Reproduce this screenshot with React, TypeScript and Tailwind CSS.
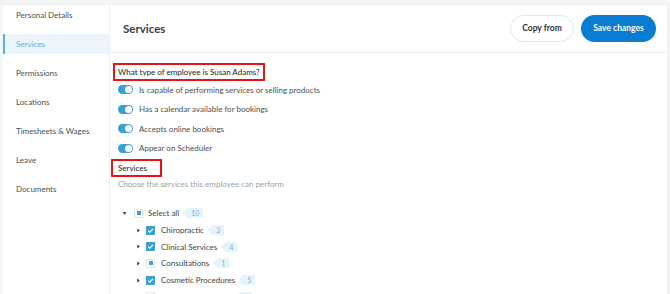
import React from 'react';

const navItems = ['Personal Details', 'Services', 'Permissions', 'Locations', 'Timesheets & Wages', 'Leave', 'Documents'];

const toggles = [
  'Is capable of performing services or selling products',
  'Has a calendar available for bookings',
  'Accepts online bookings',
  'Appear on Scheduler',
];

const services = [
  { name: 'Chiropractic', count: 3, state: 'checked' },
  { name: 'Clinical Services', count: 4, state: 'checked' },
  { name: 'Consultations', count: 1, state: 'partial' },
  { name: 'Cosmetic Procedures', count: 5, state: 'checked' },
  { name: 'Functional Medicine', count: 5, state: 'none' },
];

const Toggle = () => (
  <span className="relative inline-block w-[15px] h-[9px] rounded-full bg-[#3b9fd1] shrink-0">
    <span className="absolute right-[1px] top-[1px] w-[7px] h-[7px] rounded-full bg-white" />
  </span>
);

const Badge: React.FC<{ n: number }> = ({ n }) => (
  <span className="flex items-center ml-[4px]">
    <span className="w-0 h-0 border-y-[5px] border-y-transparent border-r-[4px] border-r-[#e7f3fb]" />
    <span className="h-[10px] px-[4px] bg-[#e7f3fb] text-[#6fb6df] text-[7px] leading-[10px]">{n}</span>
  </span>
);

const Box: React.FC<{ state: string }> = ({ state }) => {
  if (state === 'checked')
    return (
      <span className="w-[9px] h-[9px] bg-[#3e9fd0] flex items-center justify-center shrink-0">
        <svg width="7" height="7" viewBox="0 0 8 8">
          <path d="M1.3 4.2 L3.2 6 L6.8 2" stroke="white" strokeWidth="1.3" fill="none" />
        </svg>
      </span>
    );
  return (
    <span className="w-[9px] h-[9px] border border-[#e3e6ea] bg-white flex items-center justify-center shrink-0">
      {state === 'partial' && <span className="w-[4px] h-[4px] bg-[#3e9fd0]" />}
    </span>
  );
};

const Caret: React.FC<{ down?: boolean }> = ({ down }) => (
  <svg width="5" height="5" viewBox="0 0 6 6" className="shrink-0">
    {down ? <path d="M0.5 1.5 L5.5 1.5 L3 4.5 Z" fill="#333" /> : <path d="M1.5 0.5 L4.5 3 L1.5 5.5 Z" fill="#333" />}
  </svg>
);

export default function App() {
  return (
    <div className="w-[670px] h-[294px] overflow-hidden bg-[#f4f5f7] pl-[3px] pt-[4px] pr-[2px] text-[#3a3d40]" style={{ fontFamily: 'Lato, "Open Sans", sans-serif' }}>
      <div className="flex h-full bg-white border-t border-r border-[#eceef0]">
        {/* Sidebar */}
        <aside className="w-[107px] shrink-0 border-r border-[#eceef0]">
          <nav className="flex flex-col gap-[9px]">
            {navItems.map((item) => {
              const active = item === 'Services';
              return (
                <div
                  key={item}
                  className={`h-[20px] flex items-center text-[8px] ${
                    active ? 'bg-[#ebf5fb] text-[#5cb0dd] border-l-2 border-[#5cb0dd] pl-[11px]' : 'pl-[13px] text-[#4a4f54]'
                  }`}
                >
                  {item}
                </div>
              );
            })}
          </nav>
        </aside>

        {/* Main */}
        <main className="flex-1 flex flex-col">
          <header className="h-[48px] shrink-0 flex items-center justify-between pl-[13px] pr-[11px] border-b border-[#eceef0]">
            <h1 className="text-[11.5px] font-bold text-[#3a3d40]">Services</h1>
            <div className="flex items-center gap-[7px]">
              <button className="w-[64px] h-[27px] rounded-full border border-[#e3e6e9] text-[8.5px] font-bold text-[#333]">Copy from</button>
              <button className="w-[75px] h-[27px] rounded-full bg-[#0b7cd4] text-[8.5px] font-bold text-white">Save changes</button>
            </div>
          </header>

          <section className="flex flex-col items-start pl-[3px] pt-[10px]">
            <div className="flex h-[18px] items-center px-[3px] border-2 border-[#e3161c] text-[8px] text-[#222] whitespace-nowrap">
              What type of employee is Susan Adams?
            </div>
            <div className="flex flex-col gap-[10px] pl-[5px] mt-[4px]">
              {toggles.map((t) => (
                <div key={t} className="flex items-center gap-[6px] h-[9.5px] text-[8px] text-[#4a4f54] whitespace-nowrap">
                  <Toggle />
                  {t}
                </div>
              ))}
            </div>
            <div className="mt-[6px] -ml-[2px] flex h-[18px] w-[51px] items-center px-[5px] border-2 border-[#e3161c] text-[8px] text-[#222]">
              Services
            </div>
            <p className="pl-[5px] mt-[2px] h-[10px] leading-[10px] text-[8px] text-[#9ba1a7] whitespace-nowrap">Choose the services this employee can perform</p>

            <div className="mt-[16px] pl-[9px] flex flex-col">
              <div className="h-[16.7px] flex items-center">
                <Caret down />
                <span className="ml-[7px]"><Box state="partial" /></span>
                <span className="ml-[5px] text-[8px] text-[#444]">Select all</span>
                <Badge n={10} />
              </div>
              {services.map((s) => (
                <div key={s.name} className="h-[16.7px] flex items-center pl-[14px]">
                  <Caret />
                  <span className="ml-[5px]"><Box state={s.state} /></span>
                  <span className="ml-[6px] text-[8px] text-[#444] whitespace-nowrap">{s.name}</span>
                  <Badge n={s.count} />
                </div>
              ))}
            </div>
          </section>
        </main>
      </div>
    </div>
  );
}
